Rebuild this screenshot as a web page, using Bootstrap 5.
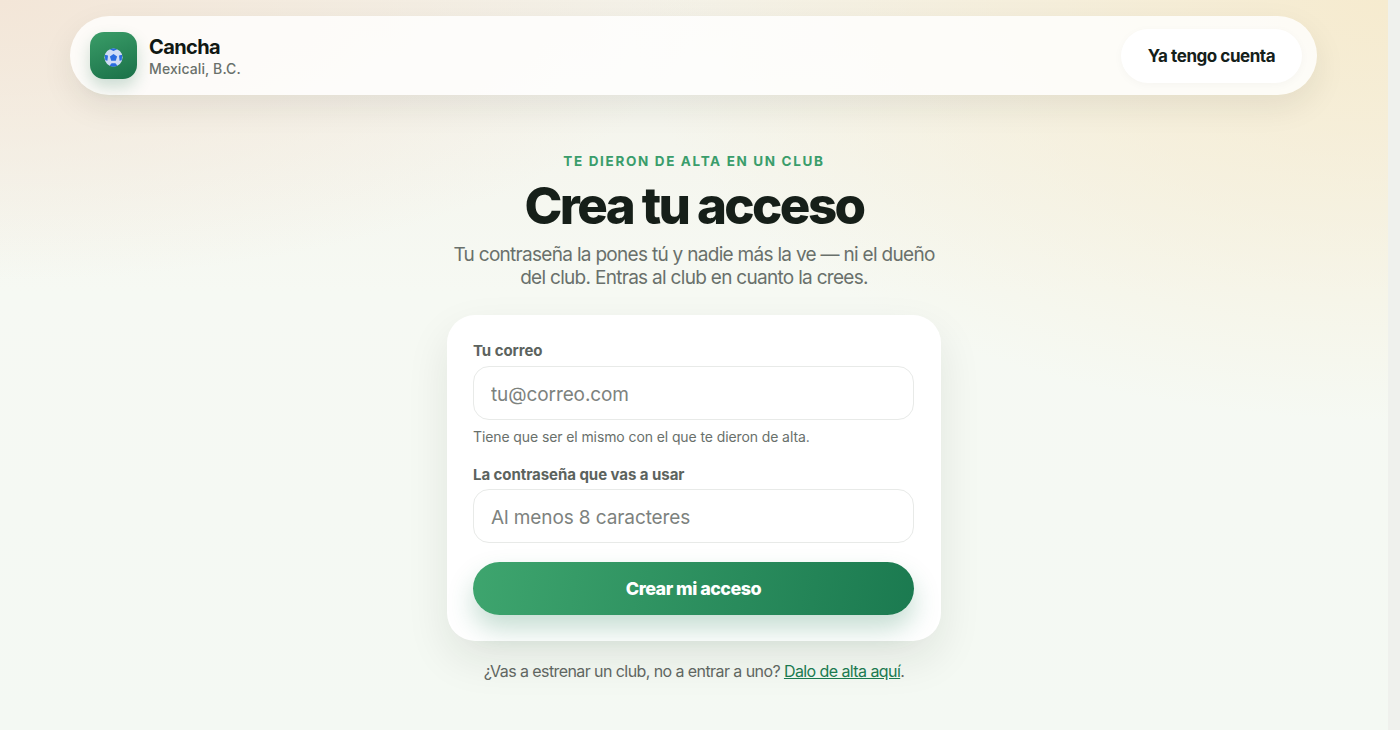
<!DOCTYPE html>
<html lang="es">
<head>
<meta charset="utf-8">
<title>Cancha</title>
<link href="https://cdn.jsdelivr.net/npm/bootstrap@5.3.0/dist/css/bootstrap.min.css" rel="stylesheet">
<style>
body {
  font-family: Inter, "Liberation Sans", sans-serif;
  color: #14201a;
  height: 730px;
  overflow: hidden;
  background: #eff1ed;
}
.page-col {
  flex: 1 1 auto; min-width: 0;
  background:
    radial-gradient(700px 280px at 0 0, #f3e6d8 0, rgba(243,230,216,0) 100%),
    radial-gradient(760px 420px at 100% 0, #f6ebcf 0, rgba(246,235,207,0) 100%),
    linear-gradient(180deg, #f4f2e9 0, #f6f9f3 40%, #f4f9f3 100%);
}
.side-rail { width: 12px; flex: none; background: #eff1ed; }
.top-bar {
  margin: 16px 71px 0 70px; height: 79px; padding: 0 15px 0 20px;
  background: rgba(255,255,255,.8); border-radius: 40px;
  box-shadow: 0 12px 32px rgba(20,32,26,.08);
}
.brand-tile {
  width: 47px; height: 47px; border-radius: 14px; padding-top: 4px;
  background: linear-gradient(160deg, #3a9d68, #1a7048);
  box-shadow: 0 8px 16px rgba(26,112,72,.22);
}
.brand-text { padding-top: 2px; }
.brand-name { font-size: 20px; font-weight: 700; letter-spacing: -.6px; line-height: 25px; color: #111814; }
.brand-place { font-size: 14px; font-weight: 500; line-height: 18px; color: #69706b; letter-spacing: .1px; }
.login-btn {
  width: 181px; height: 54px; border-radius: 27px; border: 0; padding-top: 8px;
  background: #fff; color: #14201a; font-size: 17px; font-weight: 700; letter-spacing: -.45px;
  box-shadow: 0 2px 10px rgba(20,32,26,.03);
}
.hero { width: 494px; margin: 58px auto 0; }
.eyebrow { font-size: 13.5px; line-height: 17px; font-weight: 700; letter-spacing: 1.65px; color: #3a9d6b; }
.hero-title { font-size: 51px; line-height: 58px; font-weight: 800; letter-spacing: -2.6px; color: #161f19; margin: 7px 0 8px; }
.hero-lead { font-size: 19px; line-height: 23px; color: #69706b; letter-spacing: -.7px; width: 500px; margin-left: -3px; }
.form-panel {
  margin-top: 26px; padding: 26px 27px 26px 26px; height: 326px;
  background: #fff; border-radius: 28px;
  box-shadow: 0 18px 44px rgba(20,32,26,.09);
}
.field-label { font-size: 15px; line-height: 20px; font-weight: 700; color: #5c635e; letter-spacing: -.05px; margin-bottom: 5px; }
.field-label.label-tight { margin-bottom: 4px; }
.field-input {
  height: 54px; border-radius: 16px; border: 1px solid #e8eae8; padding: 2px 17px 0;
  font-size: 19px; letter-spacing: -.1px; box-shadow: none;
}
.field-input::placeholder { color: #7d827e; opacity: 1; }
.field-hint { font-size: 14px; line-height: 18px; color: #69706b; letter-spacing: -.1px; margin: 8px 0 19px; }
.submit-btn {
  width: 100%; height: 53px; margin-top: 19px; border: 0; border-radius: 27px; color: #fff;
  font-size: 18px; font-weight: 800; letter-spacing: -.55px;
  background: linear-gradient(100deg, #3ea56e, #1b7a50);
  box-shadow: 0 14px 26px rgba(27,122,80,.25);
}
.foot-note { font-size: 16px; line-height: 22px; color: #5f6661; letter-spacing: -.58px; margin-top: 19px; }
.foot-note a { color: #1b7a50; }
</style>
</head>
<body class="d-flex">
<div class="page-col">
<header class="top-bar d-flex align-items-center justify-content-between">
  <div class="d-flex align-items-center gap-2">
    <div class="brand-tile d-flex align-items-center justify-content-center me-1">
      <svg width="19" height="19" viewBox="0 0 20 20" aria-hidden="true">
        <circle cx="10" cy="10" r="9.5" fill="#cfdcf6"/>
        <polygon points="10,6.2 13.8,9 12.4,13.4 7.6,13.4 6.2,9" fill="#2a6be0"/>
        <path d="M6 1.2 10 3.2 14 1.2 11 .4H9zM.9 7 4.2 7.8 3.6 13.4 1.3 13ZM19.1 7 15.8 7.8 16.4 13.4 18.7 13ZM5.8 18.6 8 16H12L14.2 18.6 10 19.7Z" fill="#2a6be0"/>
      </svg>
    </div>
    <div class="brand-text">
      <div class="brand-name">Cancha</div>
      <div class="brand-place">Mexicali, B.C.</div>
    </div>
  </div>
  <button type="button" class="btn login-btn">Ya tengo cuenta</button>
</header>
<main class="hero">
  <div class="text-center">
    <div class="eyebrow">TE DIERON DE ALTA EN UN CLUB</div>
    <h1 class="hero-title">Crea tu acceso</h1>
    <p class="hero-lead mb-0">Tu contraseña la pones tú y nadie más la ve — ni el dueño del club. Entras al club en cuanto la crees.</p>
  </div>
  <form class="form-panel">
    <label class="form-label d-block field-label" for="mail">Tu correo</label>
    <input class="form-control field-input" id="mail" type="email" placeholder="tu@correo.com">
    <div class="field-hint">Tiene que ser el mismo con el que te dieron de alta.</div>
    <label class="form-label d-block field-label label-tight" for="pass">La contraseña que vas a usar</label>
    <input class="form-control field-input" id="pass" type="password" placeholder="Al menos 8 caracteres">
    <button type="button" class="btn submit-btn">Crear mi acceso</button>
  </form>
  <p class="foot-note text-center">¿Vas a estrenar un club, no a entrar a uno? <a href="#">Dalo de alta aquí</a>.</p>
</main>
</div>
<div class="side-rail"></div>
<script src="https://cdn.jsdelivr.net/npm/bootstrap@5.3.0/dist/js/bootstrap.bundle.min.js"></script>
</body>
</html>
